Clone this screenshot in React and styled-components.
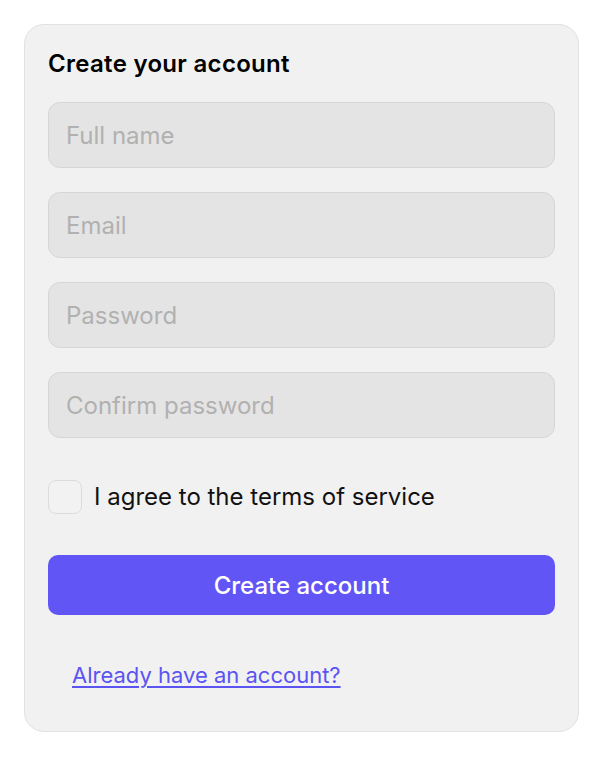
import React from "react";
import styled, { createGlobalStyle } from "styled-components";

const Global = createGlobalStyle`
  html, body { margin: 0; padding: 0; background: #ffffff; }
  body { font-family: Inter, "Noto Sans", "Liberation Sans", sans-serif; -webkit-font-smoothing: antialiased; }
  * { box-sizing: border-box; }
`;

const Card = styled.form`
  margin: 24px;
  border: 1px solid #e1e1e1;
  border-radius: 20px;
  background: #f1f1f1;
  padding: 24px 23px 24px;
  display: flex;
  flex-direction: column;
  gap: 24px;
`;

const Title = styled.h1`
  margin: 0;
  font-size: 24px;
  line-height: 29px;
  font-weight: 600;
  color: #000;
  letter-spacing: 0.3px;
`;

const Field = styled.input`
  display: block;
  width: 100%;
  height: 66px;
  border: 1.5px solid #d6d6d6;
  border-radius: 12px;
  background: #e4e4e4;
  padding: 0 17px;
  font-family: inherit;
  font-size: 24px;
  color: #111;
  outline: none;
  &::placeholder { color: #b1b1b1; }
`;

const CheckRow = styled.label`
  display: flex;
  align-items: center;
  gap: 12px;
  height: 69px;
  cursor: pointer;
`;

const Box = styled.span`
  width: 34px;
  height: 34px;
  flex: none;
  border: 1.5px solid #dcdcdc;
  border-radius: 8px;
  background: #f2f2f2;
`;

const CheckLabel = styled.span`
  font-size: 24px;
  line-height: 29px;
  color: #111;
`;

const Submit = styled.button`
  height: 60px;
  border: none;
  border-radius: 10px;
  background: #6156f5;
  color: #fff;
  font-family: inherit;
  font-size: 24px;
  font-weight: 500;
  cursor: pointer;
`;

const LinkWrap = styled.div`
  padding: 23px 24px 19px;
`;

const Link = styled.a`
  font-size: 22px;
  line-height: 26px;
  color: #5c54f1;
  text-decoration: underline;
  text-underline-offset: 3px;
  text-decoration-thickness: 1.5px;
`;

export default function App() {
  return (
    <>
      <Global />
      <Card onSubmit={(e) => e.preventDefault()}>
        <Title>Create your account</Title>
        <Field type="text" placeholder="Full name" />
        <Field type="email" placeholder="Email" />
        <Field type="password" placeholder="Password" />
        <Field type="password" placeholder="Confirm password" />
        <CheckRow>
          <Box />
          <CheckLabel>I agree to the terms of service</CheckLabel>
        </CheckRow>
        <Submit type="submit">Create account</Submit>
        <LinkWrap>
          <Link href="#">Already have an account?</Link>
        </LinkWrap>
      </Card>
    </>
  );
}
